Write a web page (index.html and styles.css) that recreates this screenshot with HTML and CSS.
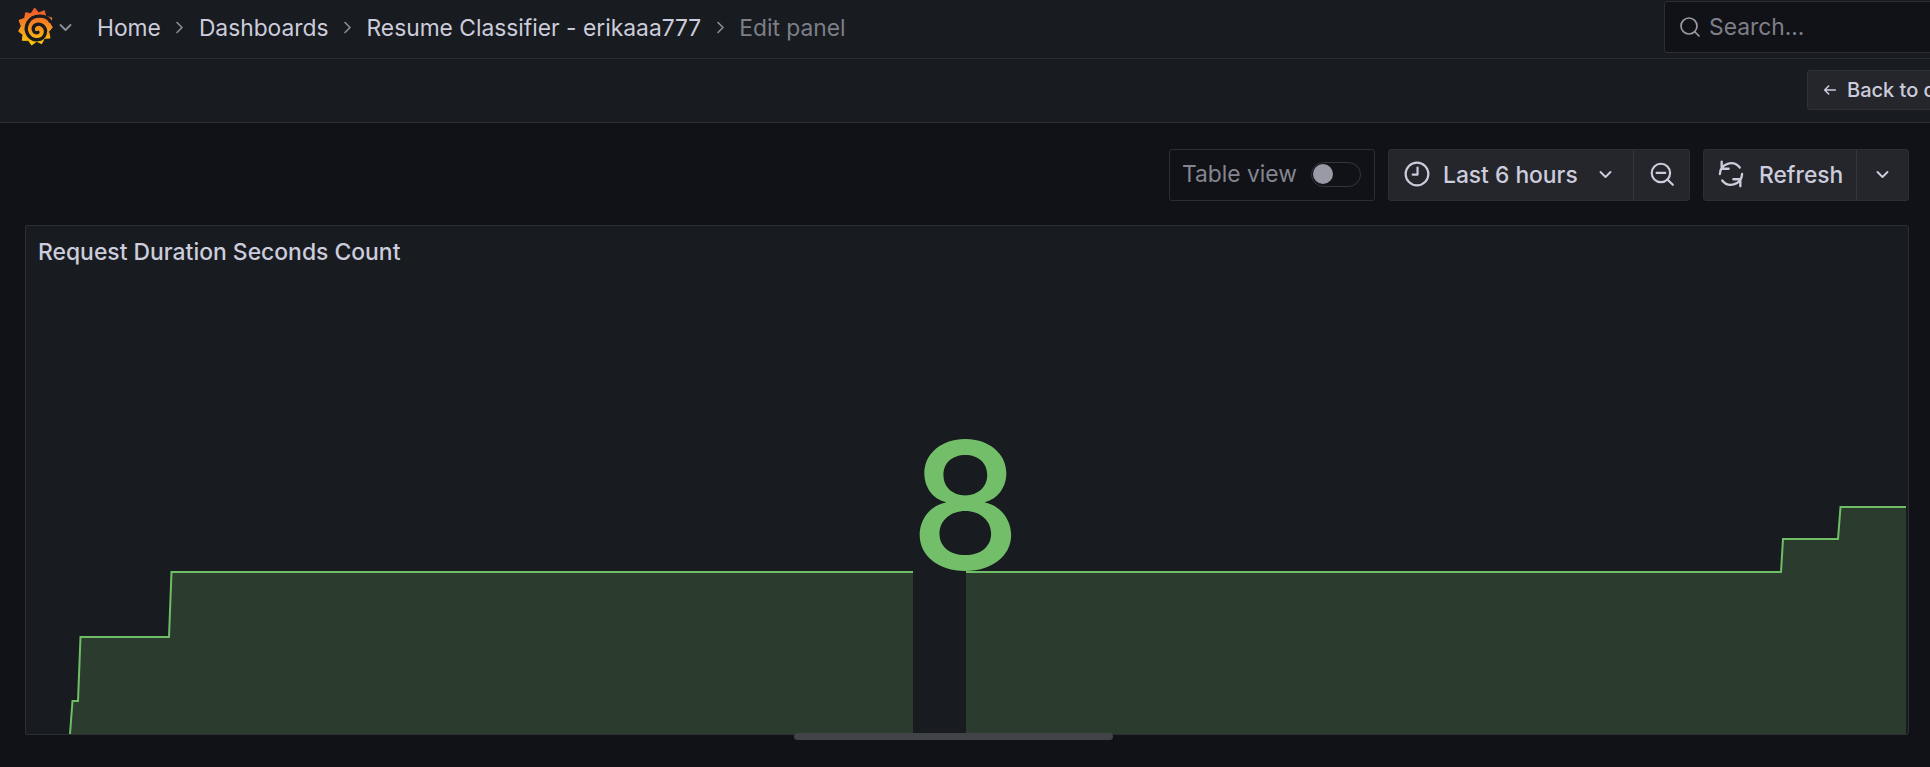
FILE: index.html
```html
<!DOCTYPE html>
<html lang="en">
<head>
    <meta charset="UTF-8">
    <title>Edit panel - Resume Classifier</title>
    <link rel="stylesheet" href="styles.css">
</head>
<body>

    <header class="topbar">
        <svg class="logo" viewBox="0 0 105 115">
            <defs>
                <linearGradient id="flame" x1="0" y1="0" x2="0" y2="1">
                    <stop offset="0" stop-color="#f0562a"/>
                    <stop offset="0.55" stop-color="#f7941e"/>
                    <stop offset="1" stop-color="#fcc70b"/>
                </linearGradient>
            </defs>
            <path fill="url(#flame)" stroke="url(#flame)" stroke-width="3" stroke-linejoin="round" d="M50 2 L62 17 L79 10 L83 27 L102 32 L96 49 L103 60 L92 73 L96 92 L79 93 L71 109 L56 102 L41 113 L31 99 L13 99 L15 82 L2 72 L10 56 L3 39 L20 33 L23 16 L39 19 Z"/>
            <path class="swirl" d="M97 42 C85 22 45 20 30 45 C15 72 35 100 60 97 C82 94 90 68 74 55 C60 44 43 55 46 68 C48 76 55 78 60 75"/>
        </svg>
        <svg class="icon caret" viewBox="0 0 12 12"><path d="M2 4 L6 8 L10 4"/></svg>
        <nav class="crumbs">
            <a href="#">Home</a>
            <svg class="icon sep" viewBox="0 0 12 12"><path d="M4 2 L8 6 L4 10"/></svg>
            <a href="#">Dashboards</a>
            <svg class="icon sep" viewBox="0 0 12 12"><path d="M4 2 L8 6 L4 10"/></svg>
            <a href="#">Resume Classifier - erikaaa777</a>
            <svg class="icon sep" viewBox="0 0 12 12"><path d="M4 2 L8 6 L4 10"/></svg>
            <span class="current">Edit panel</span>
        </nav>
        <div class="search">
            <svg class="icon" viewBox="0 0 24 24"><circle cx="11" cy="11" r="8"/><path d="M17 17 L21 21"/></svg>
            <span>Search...</span>
        </div>
    </header>

    <div class="subbar">
        <button class="back-btn">
            <svg class="icon" viewBox="0 0 12 12"><path d="M10 6 H2 M5 3 L2 6 L5 9"/></svg>
            Back to dashboard
        </button>
    </div>

    <main class="content">
        <div class="toolbar">
            <label class="table-view">
                Table view
                <span class="switch"><span class="knob"></span></span>
            </label>
            <div class="btn-group time-group">
                <button class="tool-btn time-btn">
                    <svg class="icon" viewBox="0 0 24 24"><circle cx="12" cy="12" r="10.5"/><path d="M12.5 6 V12.5 H8"/></svg>
                    <span>Last 6 hours</span>
                    <svg class="icon small" viewBox="0 0 12 12"><path d="M2 4 L6 8 L10 4"/></svg>
                </button>
                <button class="tool-btn zoom-btn">
                    <svg class="icon" viewBox="0 0 24 24"><circle cx="11" cy="11" r="8.5"/><path d="M7 11 H15 M17 17 L22 22"/></svg>
                </button>
            </div>
            <div class="btn-group refresh-group">
                <button class="tool-btn refresh-btn">
                    <svg class="icon" viewBox="0 0 24 24"><path d="M2.5 12 A9.5 9.5 0 0 1 19.5 6.5 M21.5 12 A9.5 9.5 0 0 1 4.5 17.5 M4 1.5 L4 7.5 L10 7.5 M20 22.5 L20 16.5 L14 16.5"/></svg>
                    <span>Refresh</span>
                </button>
                <button class="tool-btn more-btn">
                    <svg class="icon small" viewBox="0 0 12 12"><path d="M2 4 L6 8 L10 4"/></svg>
                </button>
            </div>
        </div>

        <section class="panel">
            <h2 class="panel-title">Request Duration Seconds Count</h2>
            <div class="panel-body">
                <!-- viewBox is in page pixels so the steps can be read off the screenshot -->
                <svg class="chart" viewBox="26 263 1882 471" preserveAspectRatio="none">
                    <path class="area" d="M70 734 L72.5 701 H78 L80.5 637 H169 L171.5 572 H913 V734 Z"/>
                    <path class="area" d="M966 734 V572 H1781 L1783 539 H1838 L1840.5 507 H1906 V734 Z"/>
                    <path class="line" d="M70 734 L72.5 701 H78 L80.5 637 H169 L171.5 572 H913"/>
                    <path class="line" d="M966 572 H1781 L1783 539 H1838 L1840.5 507 H1906"/>
                </svg>
                <div class="stat-value">8</div>
            </div>
        </section>
        <div class="scroll-thumb"></div>
    </main>

</body>
</html>
```

FILE: styles.css
```css
html, body {
    margin: 0;
    padding: 0;
    height: 767px;
    overflow: hidden;
}
body {
    font-family: 'Inter', 'Liberation Sans', sans-serif;
    font-size: 22.8px;
    background-color: #111217;
    color: #ccccdc;
    display: flex;
    flex-direction: column;
}
button {
    font-family: inherit;
    color: inherit;
}
.icon {
    fill: none;
    stroke: currentColor;
    stroke-width: 2;
    stroke-linecap: round;
    stroke-linejoin: round;
    flex: none;
}
.topbar {
    height: 58px;
    box-sizing: content-box;
    background-color: #181b1f;
    border-bottom: 1px solid #2c2e33;
    display: flex;
    align-items: center;
    padding-left: 18px;
    flex: none;
}
.logo {
    width: 35px;
    height: 39px;
    margin-top: -5px;
}
.swirl {
    fill: none;
    stroke: #181b1f;
    stroke-width: 10;
    stroke-linecap: round;
}
.caret {
    width: 15px;
    height: 15px;
    color: #8e8e9a;
    stroke-width: 1.5;
    margin-left: 5px;
    margin-top: -4px;
}
.crumbs {
    display: flex;
    align-items: center;
    margin-left: 24px;
    line-height: 28px;
    margin-top: -3px;
}
.crumbs a {
    color: #ccccdc;
    text-decoration: none;
}
.crumbs .current {
    color: #7e7f88;
}
.sep {
    width: 15px;
    height: 15px;
    margin: 0 11.5px;
    color: #8e8e9a;
    stroke-width: 1.3;
}
.search {
    margin-left: auto;
    margin-right: -74px;
    width: 325px;
    height: 50px;
    margin-top: -5px;
    background-color: #111217;
    border: 1px solid #2c2e33;
    border-radius: 3px;
    display: flex;
    align-items: center;
    padding-left: 13px;
    gap: 7px;
    color: #7e7f88;
}
.search .icon {
    width: 24px;
    height: 24px;
    color: #9a9aa6;
    stroke-width: 1.7;
}
.subbar {
    height: 63px;
    background-color: #181b1f;
    border-bottom: 1px solid #2c2e33;
    display: flex;
    align-items: center;
    justify-content: flex-end;
    flex: none;
}
.back-btn {
    flex: none;
    width: 250px;
    margin-right: -127px;
    height: 40px;
    margin-top: -1px;
    background-color: #24262c;
    border: 1px solid #2f3137;
    border-radius: 3px;
    font-size: 20px;
    font-weight: 500;
    display: flex;
    align-items: center;
    gap: 9px;
    padding: 0 0 0 14px;
    white-space: nowrap;
}
.back-btn .icon {
    width: 16px;
    height: 16px;
    stroke-width: 1.2;
}
.content {
    flex: 1;
    position: relative;
    padding: 26px 21px 32px 25px;
    display: flex;
    flex-direction: column;
    min-height: 0;
}
.toolbar {
    display: flex;
    justify-content: flex-end;
    gap: 13px;
    height: 52px;
    flex: none;
    line-height: 26px;
}
.table-view {
    width: 206px;
    box-sizing: border-box;
    border: 1px solid #2c2e33;
    border-radius: 3px;
    display: flex;
    align-items: center;
    justify-content: space-between;
    padding: 0 13px 2px 12px;
    color: #85858f;
}
.switch {
    width: 50px;
    height: 25px;
    box-sizing: border-box;
    border: 1px solid #34363c;
    border-radius: 13px;
    display: flex;
    align-items: center;
    padding-left: 1px;
}
.knob {
    width: 20px;
    height: 20px;
    border-radius: 50%;
    background-color: #9a9aa6;
}
.btn-group {
    display: flex;
    background-color: #24262c;
    border: 1px solid #2c2e33;
    border-radius: 3px;
    box-sizing: border-box;
}
.tool-btn {
    background: none;
    border: none;
    height: 100%;
    padding: 0 0 2px;
    font-size: 22.8px;
    font-weight: 500;
    display: flex;
    align-items: center;
}
.tool-btn .icon {
    width: 26px;
    height: 26px;
}
.tool-btn .small {
    width: 15px;
    height: 15px;
    stroke-width: 1.5;
}
.time-group {
    width: 302px;
}
.time-btn {
    width: 245px;
    padding-left: 15px;
    gap: 13px;
    border-right: 1px solid #34363c;
}
.time-btn .small {
    margin-left: 7px;
}
.zoom-btn {
    flex: 1;
    justify-content: center;
}
.refresh-group {
    width: 206px;
}
.refresh-btn {
    width: 153px;
    padding-left: 13px;
    gap: 14px;
    border-right: 1px solid #34363c;
}
.refresh-btn .icon {
    width: 28px;
    height: 28px;
}
.more-btn {
    flex: 1;
    justify-content: center;
}
.panel {
    margin-top: 24px;
    flex: 1;
    min-height: 0;
    background-color: #181b1f;
    border: 1px solid #2c2e33;
    border-radius: 2px;
    display: flex;
    flex-direction: column;
}
.panel-title {
    margin: 0;
    box-sizing: border-box;
    height: 37px;
    padding: 13px 0 0 12px;
    font-size: 22.9px;
    font-weight: 500;
    line-height: 26px;
    flex: none;
}
.panel-body {
    flex: 1;
    position: relative;
    min-height: 0;
}
.chart {
    display: block;
    width: 100%;
    height: 100%;
}
.area {
    fill: #2b3c2e;
}
.line {
    fill: none;
    stroke: #6ebe66;
    stroke-width: 2;
}
.stat-value {
    position: absolute;
    left: 884px;
    top: 133px;
    width: 100px;
    text-align: center;
    font-size: 176px;
    font-weight: 500;
    line-height: 218px;
    color: #73bf69;
}
.scroll-thumb {
    position: absolute;
    left: 794px;
    top: 610px;
    width: 319px;
    height: 7px;
    border-radius: 4px;
    background-color: #414349;
}
```
